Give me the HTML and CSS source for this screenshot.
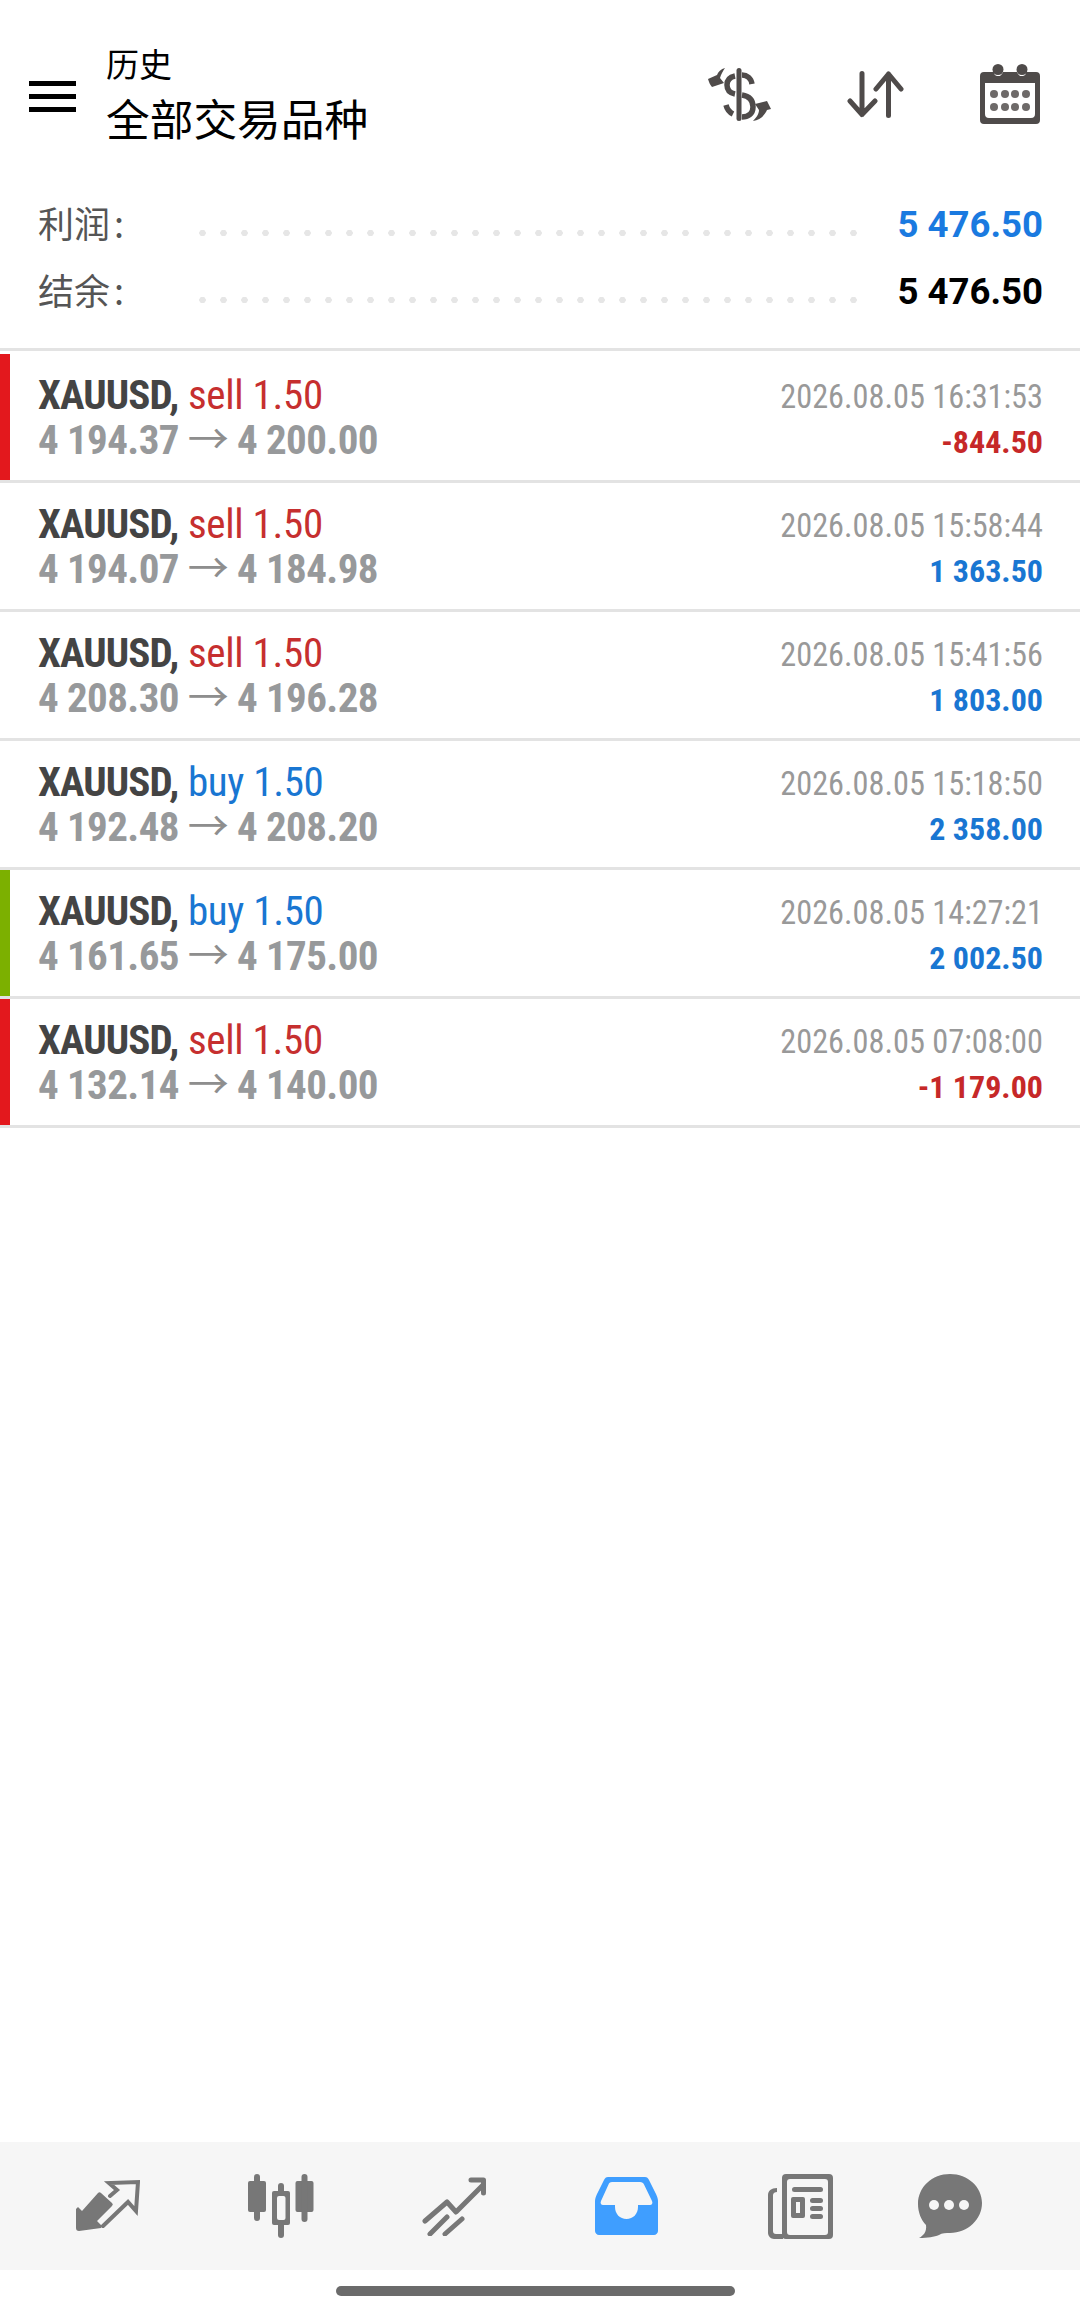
FILE: index.html
```html
<!DOCTYPE html>
<html lang="zh">
<head>
    <meta charset="UTF-8">
    <meta name="viewport" content="width=device-width, initial-scale=1.0">
    <title>历史</title>
    <link rel="stylesheet" href="styles.css">
</head>
<body>
<div class="screen">

    <header class="topbar">
        <svg class="burger" width="47" height="31" viewBox="0 0 47 31"><path d="M0 0h47v5H0zM0 13h47v5H0zM0 26h47v5H0z" fill="#000"/></svg>
        <div class="titles">
            <div class="title-sm">历史</div>
            <div class="title-lg">全部交易品种</div>
        </div>
        <div class="actions">
            <!-- dollar with arrows -->
            <svg class="act-dollar" width="63" height="53" viewBox="0 0 63 53">
                <rect x="28.500" y="0" width="5" height="53" rx="2.500" fill="#4f4b4a"/>
                <g fill="none" stroke="#4f4b4a" stroke-width="5.500">
                    <path d="M34 7c5 0 9 3 10 9"/>
                    <path d="M27 8c-5 1-8 4-8 9s3 8 8 9"/>
                    <path d="M34 27c7 1 11 5 11 12s-5 10-11 10"/>
                    <path d="M18 37c1 4 3 7 7 9"/>
                </g>
                <path fill="#4f4b4a" d="M17 0C13 1 10 4 9 7L0 11c1 3 2 6 4 8l12-4-4-5c1-4 3-7 5-10z"/>
                <path fill="#4f4b4a" d="M45 53c3-3 6-7 6-11l-4-6 12-3 4 8-4 1c-2 5-7 10-14 11z"/>
            </svg>
            <!-- sort arrows -->
            <svg class="act-sort" width="57" height="47" viewBox="0 0 57 47" fill="none" stroke="#4f4b4a" stroke-width="5" stroke-linecap="round" stroke-linejoin="round">
                <path d="M15 2.500v41M3 30l12 13.500L28 30M41.500 44.500V3M29 18L41.500 3 54 18"/>
            </svg>
            <!-- calendar -->
            <svg class="act-cal" width="60" height="60" viewBox="0 0 60 60">
                <path fill="#4f4b4a" d="M4 8h10a4 4 0 0 0 3 4h3a8 8 0 0 0 3-4h14a8 8 0 0 0 3 4h3a4 4 0 0 0 3-4h10a4 4 0 0 1 4 4v44a4 4 0 0 1-4 4H4a4 4 0 0 1-4-4V12a4 4 0 0 1 4-4zM5 19v31a4 4 0 0 0 4 4h42a4 4 0 0 0 4-4V19z" fill-rule="evenodd"/>
                <circle cx="18" cy="5.500" r="5.500" fill="#4f4b4a"/><circle cx="42" cy="5.500" r="5.500" fill="#4f4b4a"/>
                <g fill="#6e6a69"><circle cx="14" cy="30" r="4"/><circle cx="25" cy="30" r="4"/><circle cx="35" cy="30" r="4"/><circle cx="46" cy="30" r="4"/><circle cx="14" cy="43" r="4"/><circle cx="25" cy="43" r="4"/><circle cx="35" cy="43" r="4"/><circle cx="46" cy="43" r="4"/></g>
            </svg>
        </div>
    </header>

    <section class="summary">
        <div class="sum-row">
            <span class="sum-label">利润<span class="colon">:</span></span>
            <span class="leader"></span>
            <span class="sum-val blue">5 476.50</span>
        </div>
        <div class="sum-row">
            <span class="sum-label">结余<span class="colon">:</span></span>
            <span class="leader"></span>
            <span class="sum-val">5 476.50</span>
        </div>
    </section>

    <ul class="deals">
        <li class="deal loss">
            <div class="deal-left">
                <div class="l1"><b>XAUUSD,</b> <span class="sell">sell 1.50</span></div>
                <div class="l2">4 194.37 <span class="arr">→</span> 4 200.00</div>
            </div>
            <div class="deal-right">
                <div class="when">2026.08.05 16:31:53</div>
                <div class="pnl red">-844.50</div>
            </div>
        </li>
        <li class="deal">
            <div class="deal-left">
                <div class="l1"><b>XAUUSD,</b> <span class="sell">sell 1.50</span></div>
                <div class="l2">4 194.07 <span class="arr">→</span> 4 184.98</div>
            </div>
            <div class="deal-right">
                <div class="when">2026.08.05 15:58:44</div>
                <div class="pnl blue">1 363.50</div>
            </div>
        </li>
        <li class="deal">
            <div class="deal-left">
                <div class="l1"><b>XAUUSD,</b> <span class="sell">sell 1.50</span></div>
                <div class="l2">4 208.30 <span class="arr">→</span> 4 196.28</div>
            </div>
            <div class="deal-right">
                <div class="when">2026.08.05 15:41:56</div>
                <div class="pnl blue">1 803.00</div>
            </div>
        </li>
        <li class="deal">
            <div class="deal-left">
                <div class="l1"><b>XAUUSD,</b> <span class="buy">buy 1.50</span></div>
                <div class="l2">4 192.48 <span class="arr">→</span> 4 208.20</div>
            </div>
            <div class="deal-right">
                <div class="when">2026.08.05 15:18:50</div>
                <div class="pnl blue">2 358.00</div>
            </div>
        </li>
        <li class="deal win">
            <div class="deal-left">
                <div class="l1"><b>XAUUSD,</b> <span class="buy">buy 1.50</span></div>
                <div class="l2">4 161.65 <span class="arr">→</span> 4 175.00</div>
            </div>
            <div class="deal-right">
                <div class="when">2026.08.05 14:27:21</div>
                <div class="pnl blue">2 002.50</div>
            </div>
        </li>
        <li class="deal loss">
            <div class="deal-left">
                <div class="l1"><b>XAUUSD,</b> <span class="sell">sell 1.50</span></div>
                <div class="l2">4 132.14 <span class="arr">→</span> 4 140.00</div>
            </div>
            <div class="deal-right">
                <div class="when">2026.08.05 07:08:00</div>
                <div class="pnl red">-1 179.00</div>
            </div>
        </li>
    </ul>

    <nav class="tabs">
        <!-- quotes -->
        <svg width="64" height="58" viewBox="0 0 64 58" fill="#777">
            <path d="M25 16l11 10a2 2 0 0 1 0 3L21 44l5 5-1 2-22 3c-2 0-3-1-3-3V32l2-2 4 4 16-18c1-1 2-1 3 0z"/>
            <path fill="none" stroke="#777" stroke-width="4" stroke-linecap="round" d="M34 19l7-6-8-7 29-1-2 29-8-9-25 24"/>
        </svg>
        <!-- chart -->
        <svg width="66" height="64" viewBox="0 0 66 64" fill="#777">
            <rect x="0" y="7" width="18" height="31" rx="2"/><rect x="6" y="0" width="6" height="47" rx="3"/>
            <rect x="47.500" y="7" width="18" height="31" rx="2"/><rect x="53.500" y="0" width="6" height="48" rx="3"/>
            <rect x="30" y="9" width="6" height="55" rx="3"/>
            <rect x="24" y="17" width="18" height="34" rx="2"/>
            <rect x="29" y="22" width="8.500" height="24" rx="2" fill="#f6f6f6"/>
        </svg>
        <!-- trade -->
        <svg width="64" height="60" viewBox="0 0 64 60" fill="none" stroke="#777" stroke-width="5" stroke-linecap="round" stroke-linejoin="round">
            <path d="M3 45l22-19 9 10 27-27M49 4h12.500v13"/>
            <path d="M8 58l17-17M23 58l17-15"/>
        </svg>
        <!-- history (active) -->
        <svg width="63" height="58" viewBox="0 0 63 58">
            <path fill="#3f9eff" fill-rule="evenodd" d="M13 0h37c2 0 3 1 4 3l7 14c1 2 2 5 2 7v30c0 2-2 4-4 4H4c-2 0-4-2-4-4V24c0-2 1-5 2-7L9 3c1-2 2-3 4-3zM17 5c-2 0-3 1-3.500 2.500L6 24c-1 2 0 4 2 4h12v2c0 7 5 12 11.500 12S43 37 43 30v-2h12c2 0 3-2 2-4L49 7.500C48.500 6 47 5 45 5z"/>
        </svg>
        <!-- news -->
        <svg class="tab-news" width="65" height="65" viewBox="0 0 65 65" fill="#777">
            <path fill-rule="evenodd" d="M18 0h43a4 4 0 0 1 4 4v57a4 4 0 0 1-4 4H18a4 4 0 0 1-4-4V4a4 4 0 0 1 4-4zM22 5a3 3 0 0 0-3 3v50a3 3 0 0 0 3 3h35a3 3 0 0 0 3-3V8a3 3 0 0 0-3-3z"/>
            <path d="M9 14h0v4c-2 0-4 1-4 3v36c0 2 1 3 3 3h7v5H6c-3 0-6-3-6-6V21c0-4 3-7 9-7z"/>
            <rect x="24" y="13" width="31" height="5" rx="2.500"/>
            <rect x="42" y="24" width="13" height="5" rx="2.500"/><rect x="42" y="40" width="13" height="5" rx="2.500"/><rect x="42" y="32" width="13" height="5" rx="2.500"/>
            <path fill-rule="evenodd" d="M25 23h10a2 2 0 0 1 2 2v17a2 2 0 0 1-2 2H25a2 2 0 0 1-2-2V25a2 2 0 0 1 2-2zM28 28v11h4V28z"/>
        </svg>
        <!-- chat -->
        <svg width="64" height="64" viewBox="0 0 64 64">
            <path fill="#777" d="M32 0c18 0 32 13 32 29S50 59 32 59c-4 0-8 0-11 2-5 2-11 3-20 3 4-2 8-6 7-13C3 46 0 38 0 30 0 13 14 0 32 0z"/>
            <g fill="#f6f6f6"><circle cx="16" cy="31" r="5"/><circle cx="31" cy="31" r="5"/><circle cx="46" cy="31" r="5"/></g>
        </svg>
    </nav>

    <div class="home"><span class="home-bar"></span></div>
</div>
</body>
</html>
```

FILE: styles.css
```css
* {
    box-sizing: border-box;
}
html, body {
    margin: 0;
    padding: 0;
    background: #fff;
}
.screen {
    width: 1080px;
    height: 2312px;
    display: flex;
    flex-direction: column;
    font-family: Roboto, "Noto Sans CJK SC", sans-serif;
}

.topbar {
    height: 180px;
    display: flex;
    align-items: flex-start;
    padding: 47px 40px 0 29px;
}
.burger {
    margin-top: 34px;
    margin-right: 30px;
    flex: none;
}
.title-sm {
    font-family: "Noto Sans CJK SC", sans-serif;
    font-size: 33px;
    line-height: 33px;
    color: #000;
}
.title-lg {
    font-family: "Noto Sans CJK SC", sans-serif;
    font-size: 43.700px;
    line-height: 46px;
    margin-top: 14px;
    color: #000;
}
.actions {
    margin-left: auto;
    display: flex;
    align-items: center;
    height: 60px;
    margin-top: 17px;
}
.act-dollar { margin-right: 76px; }
.act-sort { margin-right: 76px; }

.summary {
    height: 171px;
    padding: 8px 38px 0;
    border-bottom: 3px solid #e3e3e3;
}
.sum-row {
    display: flex;
    align-items: center;
    height: 67px;
}
.sum-label {
    width: 154px;
    font-family: "Noto Sans CJK SC", sans-serif;
    font-size: 36px;
    color: #555;
    flex: none;
}
.colon {
    margin-left: 4px;
}
.leader {
    flex: none;
    width: 672px;
    height: 8px;
    margin-top: 22px;
    background-image: radial-gradient(circle, #e6e6e6 3px, transparent 3.5px);
    background-size: 21px 8px;
}
.sum-val {
    margin-left: auto;
    margin-right: -1px;
    padding-top: 6px;
    font-size: 36.600px;
    font-weight: 700;
    color: #000;
}
.sum-val.blue { color: #1a7ae0; }

.deals {
    list-style: none;
    margin: 0;
    padding: 3px 0 0;
}
.deal {
    position: relative;
    height: 129px;
    display: flex;
    justify-content: space-between;
    padding: 0 37px 0 38px;
    border-bottom: 3px solid #e3e3e3;
}
.deal.loss::before, .deal.win::before {
    content: "";
    position: absolute;
    left: 0;
    top: 0;
    bottom: 0;
    width: 10px;
    background: #e3181d;
}
.deal.win::before { background: #7cb000; }

.deal-left, .deal-right {
    font-stretch: 75%;
    white-space: nowrap;
}
.deal-left { padding-top: 19px; }
.deal-right {
    padding-top: 21px;
    text-align: right;
}
.l1, .l2 {
    font-size: 41px;
    line-height: 45px;
}
.l1 b {
    font-weight: 700;
    letter-spacing: -0.900px;
    color: #444;
}
.sell, .buy { letter-spacing: -0.300px; }
.sell { color: #c62f2f; }
.buy { color: #1976d2; }
.l2 {
    font-weight: 700;
    letter-spacing: -0.600px;
    color: #97999b;
}
.arr {
    font-weight: 400;
    color: #8e8e8e;
}
.when {
    font-size: 32.300px;
    line-height: 45px;
    color: #999;
}
.pnl {
    font-size: 32px;
    line-height: 45px;
    font-weight: 700;
}
.pnl.red { color: #c62828; }
.pnl.blue { color: #1976d2; }

.tabs {
    margin-top: auto;
    height: 128px;
    background: #f6f6f6;
    display: grid;
    grid-template-columns: repeat(5, 173px) 128px;
    padding-left: 21px;
    align-items: center;
    justify-items: center;
}
.tab-news { margin-left: 2px; }
.home {
    height: 42px;
    display: flex;
    justify-content: center;
    padding: 16px 9px 0 0;
}
.home-bar {
    display: block;
    width: 399px;
    height: 10px;
    border-radius: 5px;
    background: #6b6b6b;
}
```
